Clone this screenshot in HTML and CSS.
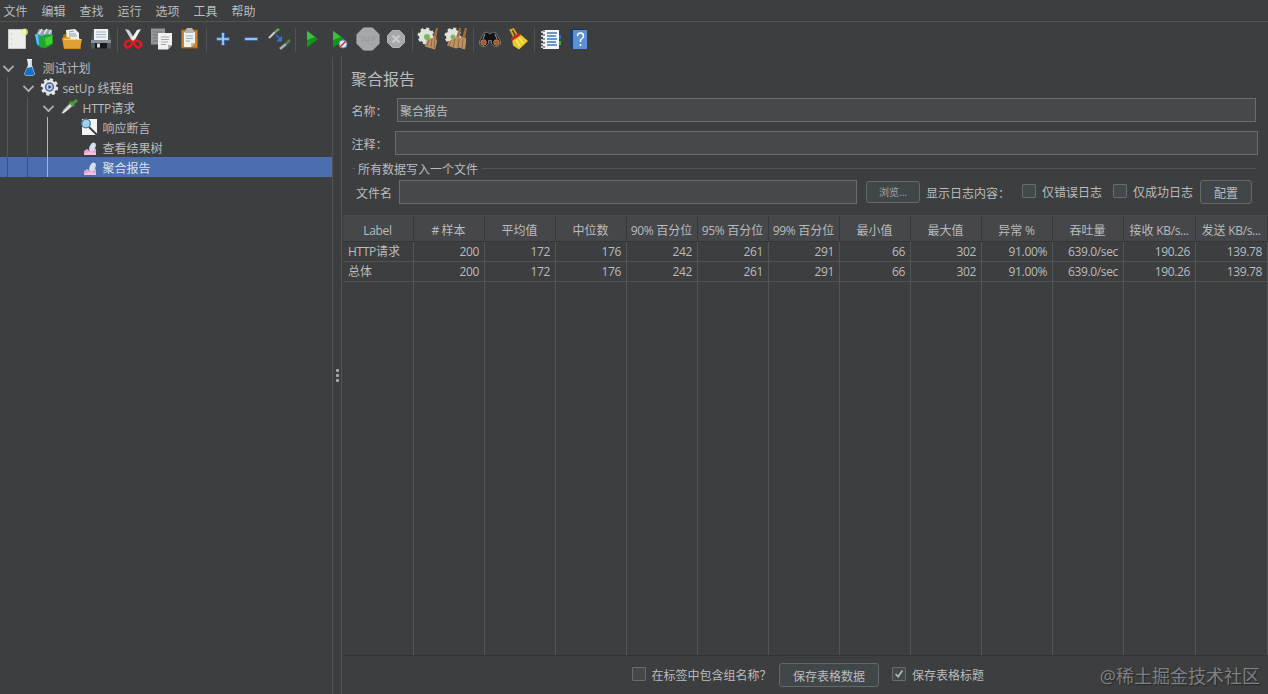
FILE: index.html
```html
<!DOCTYPE html>
<html lang="zh-CN">
<head>
<meta charset="utf-8">
<title>聚合报告</title>
<link rel="stylesheet" href="styles.css">
</head>
<body>
<div class="app">
  <nav class="menu"><span>文件</span><span>编辑</span><span>查找</span><span>运行</span><span>选项</span><span>工具</span><span>帮助</span></nav>
  <div class="toolbar">
    <svg viewBox="0 0 28 28"><path d="M5.500 4.500h17v19h-17z" fill="#eceeec" stroke="#c9cbc9"/><path d="M8 9h1M8 14h1M8 19h1" stroke="#aaa"/><circle cx="21.500" cy="7" r="3.500" fill="#e5ee8c" opacity=".8"/><circle cx="21.500" cy="7" r="1.500" fill="#fafcc8"/></svg>
    <svg viewBox="0 0 28 28"><path d="M5 10l3-6 5 1 3-1 5 1v7H5z" fill="#8ea5ae"/><path d="M8 9l3-5M13 9l3-5M18 9l2-4" stroke="#dce5e8" stroke-width="1.500"/><path d="M4 9l7 2v12l-5-3z" fill="#148fd0"/><path d="M4 9l3 1 1 10-2-1z" fill="#5bc4f2"/><path d="M9 12q6-4 13-2v9l-8 4.500-5-2z" fill="#23a625"/><path d="M14 13l7-2v7l-6 3z" fill="#42cf35"/></svg>
    <svg viewBox="0 0 28 28"><path d="M4 10l2-1h3v4h12l1 11H5z" fill="#b7750e"/><path d="M7 5l9-1 4 4v8H8z" fill="#f1f1ed"/><path d="M10 7l5-1M10 9h7M10 11h8" stroke="#999"/><path d="M3 13l7-1 2 2h11l-2 9.500H5z" fill="#e0a036"/><path d="M5 14.500h17" stroke="#f8ce72"/></svg>
    <svg viewBox="0 0 28 28"><path d="M6 4h16l2 11v8.500H4V15z" fill="#50585e"/><path d="M7 4h14v11H7z" fill="#f0f3f6"/><path d="M9 7h10M9 9.500h10M9 12h10" stroke="#a6b3c7"/><path d="M4 15h20v3H4z" fill="#8a9298"/><path d="M8 18h12v5.500H8z" fill="#17191b"/><path d="M10 18.500h3v4h-3z" fill="#d8dadd"/></svg>
    <i class="sep s4"></i>
    <svg viewBox="0 0 28 28"><path d="M6 4l4 1 7 11-3 2z" fill="#d0d4d5"/><path d="M22 4l-4 1-7 11 3 2z" fill="#f1f2f2"/><path d="M13 16l-3-.5-3 1.500-1.500 3.500 3 2.500 3-2 2.500-4 2.500 4 3 2 3-2.500-1.500-3.500-3-1.500-3 .5" fill="none" stroke="#dc1c20" stroke-width="2.400"/></svg>
    <svg viewBox="0 0 28 28"><path d="M4 3.500h14v16H4z" fill="#92969a"/><path d="M6 7h9M6 10h9M6 13h5M6 16h5" stroke="#74787b"/><path d="M11 8h14v12l-4 4.500H11z" fill="#eff0ef"/><path d="M14 12h8M14 14.500h8M14 17h7M14 19.500h5" stroke="#a8aaa9"/><path d="M21 24v-4h4z" fill="#aaa"/></svg>
    <svg viewBox="0 0 28 28"><path d="M6.500 5h16v18h-16z" fill="#c8862b" stroke="#9b5d12"/><path d="M9 7h11v11l-4 4H9z" fill="#f1f1ef"/><path d="M10 6l2-3h5l2 3v2h-9z" fill="#b8b5ae"/><path d="M11 11h7M11 13.500h7M11 16h4" stroke="#a8a8a8"/><path d="M16 22v-4h4z" fill="#bbb"/></svg>
    <i class="sep s6"></i>
    <svg viewBox="0 0 28 28"><path d="M7.500 14h13M14 7.500v13" stroke="#3d72bc" stroke-width="3.500"/><path d="M8 14h12M14 8v12" stroke="#a6d0fa" stroke-width="1.700"/></svg>
    <svg viewBox="0 0 28 28"><path d="M7.500 14h13.500" stroke="#3d72bc" stroke-width="3.500"/><path d="M8 14h12" stroke="#a6d0fa" stroke-width="1.700"/></svg>
    <svg viewBox="0 0 28 28"><path d="M4 13l6-6" stroke="#c5cdc9" stroke-width="2.200"/><path d="M10 7l4-3" stroke="#5fab4f" stroke-width="2.500"/><path d="M15 24l6-5" stroke="#aab3ad" stroke-width="2.500"/><path d="M21 19l4-4" stroke="#53824c" stroke-width="2.500"/><path d="M11 10l4 4" stroke="#2a6bb8" stroke-width="1.800"/><path d="M17 11v5.500h-6z" fill="#3478c7"/></svg>
    <i class="sep s5"></i>
    <svg viewBox="0 0 28 28"><path d="M9 5.500l11 8.500-11 8.500z" fill="#129517"/><path d="M9 6l8 6-8 3z" fill="#3fc03c"/></svg>
    <svg viewBox="0 0 28 28"><path d="M7 5.500l12 9-12 8z" fill="#129517"/><path d="M7 6l8 6-8 3z" fill="#3fc03c"/><circle cx="17" cy="19" r="4" fill="#d8e9f6" stroke="#5a91bf"/><path d="M14 22l6-6" stroke="#d22" stroke-width="1.500"/></svg>
    <svg viewBox="0 0 28 28"><path d="M9.500 3h9l6.500 6.500v9L18.500 25h-9L3 18.500v-9z" fill="#a5a7a8" stroke="#b3b4b5"/><path d="M7 12h3v4H7m5-4v4h3v-4m3 0v4m0-4h3v2h-3" fill="none" stroke="#999b9b"/></svg>
    <svg viewBox="0 0 28 28"><path d="M10.500 5.500h7l5 5v7l-5 5h-7l-5-5v-7z" fill="#a5a7a8" stroke="#b3b4b5"/><path d="M10.500 10.500l7 7m0-7l-7 7" stroke="#cbcccc" stroke-width="2.200"/></svg>
    <i class="sep s4"></i>
    <svg viewBox="0 0 28 28"><circle cx="12" cy="11" r="7" fill="#dfe3dd"/><circle cx="12" cy="11" r="7.200" fill="none" stroke="#dfe3dd" stroke-width="2.500" stroke-dasharray="3 2.650"/><circle cx="13" cy="12" r="3" fill="#78b957"/><path d="M22 3l2 0-2 11-3-1z" fill="#a26c3f"/><path d="M13 14l9-2 1 5-2 7.500-10-3z" fill="#bd9364"/><path d="M15 15l-2 6m5-7l-1 8m4-9l-1 10" stroke="#815a37" stroke-width=".8"/></svg>
    <svg viewBox="0 0 28 28"><circle cx="11" cy="11" r="7" fill="#dfe3dd"/><circle cx="11" cy="11" r="7.200" fill="none" stroke="#dfe3dd" stroke-width="2.500" stroke-dasharray="3 2.650"/><circle cx="11" cy="12" r="2.500" fill="#78b957"/><path d="M17 3h2l-2 11-3-1zM23 3h2l-2 11-3-1z" fill="#a26c3f"/><path d="M7 16l7-4 10 1v4l-1 7.500-6-2-3 1-9-3z" fill="#bd9364"/><path d="M9 16l-2 5m6-7l-2 9m6-9l-1 8m5-8l-1 9" stroke="#815a37" stroke-width=".8"/></svg>
    <i class="sep s6"></i>
    <svg viewBox="0 0 28 28"><path d="M8 8l3-1 3 2 3-2 3 1 4.500 8v3.500l-3 2h-3l-3-3v-3h-3v3l-3 3h-3l-3-2V16z" fill="#121314" stroke="#85878a" stroke-width=".8"/><path d="M9 9l-2 5M19 9l2 5" stroke="#9b9da0"/><circle cx="7.500" cy="17.500" r="2.800" fill="#a3592c" stroke="#d0a080" stroke-width=".7"/><circle cx="20.500" cy="17.500" r="2.800" fill="#a3592c" stroke="#d0a080" stroke-width=".7"/></svg>
    <svg viewBox="0 0 28 28"><path d="M6.500 5l3-1 4 7-3 2z" fill="none" stroke="#dca525" stroke-width="1.800"/><path d="M8 14l8-5 8 7-9 8.500-6-4z" fill="#ecc928"/><path d="M7 13l8-5 2 2-9 6z" fill="#c92b21"/><path d="M12 15l4 6m-1-8l4 5" stroke="#fff08a" stroke-width="1.200"/></svg>
    <i class="sep s5"></i>
    <svg viewBox="0 0 28 28"><path d="M6 5h16v19H6z" fill="#f5f8fa"/><path d="M10 8h10M10 11h9M10 14h10M10 17h9M10 20h10" stroke="#3979bd" stroke-width="1.300"/><path d="M4 7h4m-4 4h4m-4 4h4m-4 4h4m-4 3h4" stroke="#f4f4f4" stroke-width="1.700"/><path d="M7 5v19" stroke="#263039" stroke-dasharray="2 2"/><path d="M22 10h2v4h-2z" fill="#2c70bd"/><path d="M22 16h2v4h-2z" fill="#3ba739"/></svg>
    <svg viewBox="0 0 28 28"><path d="M5 4l3 1v19l-3-2z" fill="#1d3e6a"/><path d="M8 5h14v19H8z" fill="#5a91d7"/><path d="M5 4h15l2 1H8z" fill="#1d3048"/><path d="M12.500 11q0-3 3-3t3 3q0 2-3 4v2m0 2v2" fill="none" stroke="#fff" stroke-width="1.500"/></svg>
  </div>
  <div class="work">
    <aside class="tree">
      <div class="node"><i class="chev"></i><svg viewBox="0 0 18 18"><path d="M7 1h5v6l3 9-2 2H6l-2-2 4-9z" fill="#c6dff2"/><path d="M7 10l5-1 2.500 7-1.500 1.500H6L4.500 16z" fill="#1671c9"/><path d="M7 1.500h5M9 2v6" stroke="#fff"/></svg><span>测试计划</span></div>
      <div class="node"><i class="guide"></i><i class="chev"></i><svg viewBox="0 0 18 18"><circle cx="9.500" cy="9" r="7" fill="#e3e6ea"/><circle cx="9.500" cy="9" r="7.500" fill="none" stroke="#e3e6ea" stroke-width="2.500" stroke-dasharray="3.200 2.690"/><circle cx="9.500" cy="9" r="3.900" fill="#bcd1ed" stroke="#53658f" stroke-width="1.500"/><path d="M8.500 7l3 2-3 2z" fill="#183f85"/></svg><span><b class="latin wide">setUp </b>线程组</span></div>
      <div class="node"><i class="guide"></i><i class="guide"></i><i class="chev"></i><svg viewBox="0 0 18 18"><path d="M1 16l3-5 7-7 3 3-7 6z" fill="#a5aea9"/><path d="M3 15l9-9" stroke="#f2f5f3" stroke-width="1.500"/><path d="M10 4l4 4M12 6l5-4" stroke="#4c973b" stroke-width="3"/></svg><span><b class="latin wide">HTTP</b>请求</span></div>
      <div class="node"><i class="guide"></i><i class="guide"></i><i class="guide blue"></i><i class="blank"></i><svg viewBox="0 0 18 18"><path d="M2 1h15v16H2z" fill="#f1f4f5"/><path d="M9 9l8 8" stroke="#3c4145" stroke-width="2"/><circle cx="6" cy="5.500" r="4.300" fill="#9dd0ec" stroke="#4d7892" stroke-width="1.200"/></svg><span>响应断言</span></div>
      <div class="node"><i class="guide"></i><i class="guide"></i><i class="guide blue"></i><i class="blank"></i><svg viewBox="0 0 18 18"><path d="M4 17v-4l3-2 3 2 3-3 3 1v6z" fill="#eaa1cf"/><ellipse cx="12.500" cy="9" rx="2.800" ry="4.800" transform="rotate(25 12.500 9)" fill="#d6dff2"/><path d="M4 16l5-2 7 1v2H4z" fill="#f4c3e0"/></svg><span>查看结果树</span></div>
      <div class="node selected"><i class="guide"></i><i class="guide"></i><i class="guide blue"></i><i class="blank"></i><svg viewBox="0 0 18 18"><path d="M4 17v-4l3-2 3 2 3-3 3 1v6z" fill="#eaa1cf"/><ellipse cx="12.500" cy="9" rx="2.800" ry="4.800" transform="rotate(25 12.500 9)" fill="#d6dff2"/><path d="M4 16l5-2 7 1v2H4z" fill="#f4c3e0"/></svg><span>聚合报告</span></div>
    </aside>
    <div class="splitter"><i></i><i></i><i></i></div>
    <main class="panel">
      <h1>聚合报告</h1>
      <div class="form-row name"><label>名称：</label><div class="field">聚合报告</div></div>
      <div class="form-row comment"><label>注释：</label><div class="field"></div></div>
      <div class="group-title"><span>所有数据写入一个文件</span></div>
      <div class="file-row"><label>文件名</label><div class="field file"></div><button class="browse">浏览...</button><span class="log">显示日志内容：</span><i class="check"></i><span class="option">仅错误日志</span><i class="check"></i><span class="option">仅成功日志</span><button class="config">配置</button></div>
      <div class="table">
        <div class="tr head"><span><b class="latin">Label</b></span><span><b class="latin"># </b>样本</span><span>平均值</span><span>中位数</span><span><b class="latin">90% </b>百分位</span><span><b class="latin">95% </b>百分位</span><span><b class="latin">99% </b>百分位</span><span>最小值</span><span>最大值</span><span>异常<b class="latin"> %</b></span><span>吞吐量</span><span>接收<b class="latin"> KB/s...</b></span><span>发送<b class="latin"> KB/s...</b></span></div>
        <div class="tr"><span><b class="latin">HTTP</b>请求</span><span>200</span><span>172</span><span>176</span><span>242</span><span>261</span><span>291</span><span>66</span><span>302</span><span>91.00%</span><span>639.0/sec</span><span>190.26</span><span>139.78</span></div>
        <div class="tr"><span>总体</span><span>200</span><span>172</span><span>176</span><span>242</span><span>261</span><span>291</span><span>66</span><span>302</span><span>91.00%</span><span>639.0/sec</span><span>190.26</span><span>139.78</span></div>
        <div class="tr rest"><span></span><span></span><span></span><span></span><span></span><span></span><span></span><span></span><span></span><span></span><span></span><span></span><span></span></div>
      </div>
      <footer><i class="check"></i><span class="include">在标签中包含组名称？</span><button>保存表格数据</button><i class="check"><svg viewBox="0 0 14 14"><path d="M3 7l3 3 5-7" fill="none" stroke="#b4b8b9" stroke-width="2"/></svg></i><span>保存表格标题</span></footer>
    </main>
  </div>
  <div class="watermark">@稀土掘金技术社区</div>
</div>
</body>
</html>
```
FILE: styles.css
```css
* { box-sizing: border-box; }
body { margin: 0; background: #3c3e40; color: #bbbcbd; font: 12px/20px "Open Sans", "Noto Sans CJK SC", sans-serif; }
b { font-weight: inherit; }
.app { position: relative; width: 1268px; height: 694px; display: flex; flex-direction: column; overflow: hidden; }
.latin { letter-spacing: -0.35px; white-space: pre; }
.latin.wide { letter-spacing: -0.15px; }
.menu { height: 22px; display: flex; gap: 14px; padding: 2px 0 0 3.5px; border-bottom: 1px solid #515355; white-space: nowrap; line-height: 19px; }
.menu span { width: 24px; }
.toolbar { height: 35px; display: flex; padding: 3px 0 0 3px; }
.toolbar svg { width: 28px; height: 28px; flex: none; }
.sep { height: 24px; margin-top: 3px; background: linear-gradient(#515557, #515557) center / 1px 100% no-repeat; }
.s4 { width: 4px; }
.s5 { width: 5px; }
.s6 { width: 6px; }
.work { flex: 1; min-height: 0; display: flex; }
.tree { width: 332px; flex: none; }
.node { display: flex; height: 20px; line-height: 24px; white-space: nowrap; }
.node svg { width: 18px; height: 18px; margin: 1px 4.5px 0 0; flex: none; }
.node.selected { background: #4b6eaf; color: #dce1ea; }
.guide { width: 20px; padding-left: 7px; }
.guide::before { content: ""; display: block; width: 1px; height: 20px; background: #56595b; }
.selected .guide::before { background: #3b5280; }
.guide.blue::before { background: #7fc4ea; }
.blank { width: 20px; }
.chev { width: 20px; padding: 5px 0 0 4px; }
.chev::before { content: ""; display: block; width: 7px; height: 7px; border: solid #adafb0; border-width: 0 2px 2px 0; transform: rotate(45deg) scale(.9); }
.splitter { width: 10px; flex: none; border: solid #515355; border-width: 0 1px; display: flex; flex-direction: column; align-items: center; gap: 2px; padding-top: 312px; }
.splitter i { width: 3px; height: 3px; border-radius: 1px; background: #a5a7a8; }
.panel { flex: 1; min-width: 0; display: flex; flex-direction: column; padding-left: 1px; }
h1 { margin: 10px 0 0 8px; height: 31px; font-size: 16px; font-weight: 400; line-height: 25px; }
.form-row { display: flex; height: 24px; margin-bottom: 9px; padding-left: 8.5px; line-height: 28px; }
.form-row label { flex: none; }
.name label { width: 45.5px; }
.comment label { width: 43.5px; }
.field { height: 24px; background: #45494a; border: 1px solid #686d6f; padding-left: 2px; line-height: 25px; }
.form-row .field { flex: 1; margin-right: 12px; }
.comment .field { margin-right: 10px; }
.comment { margin-bottom: 3px; }
.group-title { display: flex; height: 22px; margin: 0 12px 0 9px; line-height: 24px; }
.group-title::before, .group-title::after { content: ""; height: 1px; margin-top: 10px; background: #535658; }
.group-title::before { width: 3px; margin-right: 3px; }
.group-title::after { flex: 1; margin-left: 4px; }
.file-row { display: flex; height: 35px; padding-left: 13px; line-height: 26px; white-space: nowrap; }
.file-row label { width: 43px; line-height: 27px; }
.field.file { width: 458px; margin-right: 9px; }
button { height: 24px; padding: 0; background: #414749; color: inherit; border: 1px solid #646a6c; border-radius: 3px; font: inherit; line-height: 25px; }
.browse { width: 54px; height: 22px; margin: 1px 6px 0 0; font-size: 10px; line-height: 20px; color: #a0a3a4; }
.log { width: 96px; line-height: 27px; }
.check { display: block; width: 14px; height: 14px; flex: none; background: #43494a; border: 1px solid #686d6f; border-radius: 1px; }
.check svg { display: block; width: 12px; height: 12px; }
.file-row .check { margin: 4px 6px 0 0; }
.option { width: 71px; }
.option + .config { margin-left: -4px; }
.config { width: 52px; }
.table { flex: 1; display: flex; flex-direction: column; border-bottom: 1px solid #333638; }
.tr { display: grid; grid-template-columns: repeat(11, 71px) 72px 72px; height: 20px; line-height: 20px; border-bottom: 1px solid #4e5254; white-space: nowrap; }
.tr span { border-right: 1px solid #515557; padding-right: 5px; text-align: right; letter-spacing: -0.35px; }
.tr span:first-child { padding-left: 5px; text-align: left; letter-spacing: 0; }
.head { height: 27px; line-height: 29px; background: #45474a; border-top: 1px solid #484b4d; border-bottom-color: #343739; }
.head span, .head span:first-child { padding: 0 1px 0 0; text-align: center; letter-spacing: 0; border-color: #36393b; }
.rest { flex: 1; border: 0; }
footer { height: 38px; display: flex; padding: 7px 0 0 289px; line-height: 25px; white-space: nowrap; }
footer .check { margin: 4px 6px 0 0; }
footer .include { width: 127px; margin-left: -.5px; margin-right: .5px; }
footer button { width: 100px; margin-right: 13px; }
.watermark { position: absolute; right: 8px; bottom: 5px; font-size: 18px; line-height: 26px; color: #7e8081; text-shadow: 1px 1px 1px #242628; }
```
